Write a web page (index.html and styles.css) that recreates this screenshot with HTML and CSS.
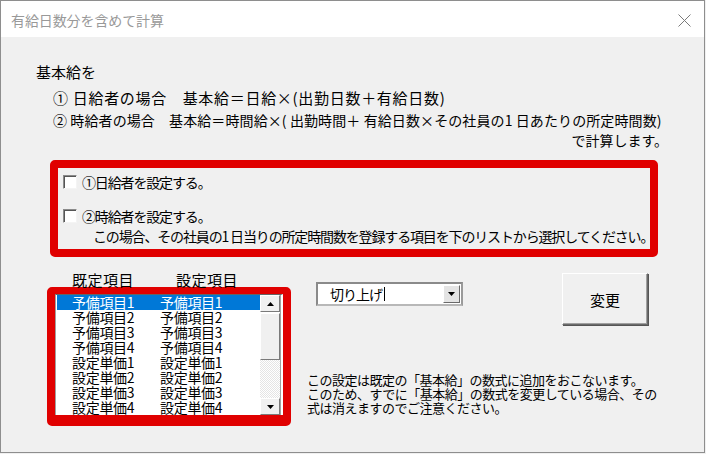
FILE: index.html
```html
<!DOCTYPE html>
<html lang="ja">
<head>
<meta charset="utf-8">
<title>有給日数分を含めて計算</title>
<link rel="stylesheet" href="styles.css">
</head>
<body>
<div class="window">
  <div class="titlebar">
    <span class="title">有給日数分を含めて計算</span>
    <svg class="close" width="13" height="13" viewBox="0 0 13 13"><path d="M0.5 0.5 L12.5 12.5 M12.5 0.5 L0.5 12.5" stroke="#7a7a7a" stroke-width="1" fill="none"/></svg>
  </div>
  <div class="content">
    <div class="intro">
      <div class="l1">基本給を</div>
      <div class="l2">① 日給者の場合　基本給＝日給×(出勤日数＋有給日数)</div>
      <div class="l3">② 時給者の場合　基本給＝時間給×( 出勤時間＋ 有給日数×その社員の1 日あたりの所定時間数)</div>
      <div class="l4">で計算します。</div>
    </div>
    <div class="redbox options">
      <label class="chk-row r1"><span class="chk"></span><span>①日給者を設定する。</span></label>
      <label class="chk-row r2"><span class="chk"></span><span>②時給者を設定する。</span></label>
      <div class="note1">この場合、その社員の1 日当りの所定時間数を登録する項目を下のリストから選択してください。</div>
    </div>
    <div class="lower">
      <div class="leftcol">
        <div class="labels"><span class="lab1">既定項目</span><span class="lab2">設定項目</span></div>
        <div class="redbox listwrap">
          <div class="listbox">
            <div class="rows">
              <div class="row sel"><span class="c1">予備項目1</span><span>予備項目1</span></div>
              <div class="row"><span class="c1">予備項目2</span><span>予備項目2</span></div>
              <div class="row"><span class="c1">予備項目3</span><span>予備項目3</span></div>
              <div class="row"><span class="c1">予備項目4</span><span>予備項目4</span></div>
              <div class="row"><span class="c1">設定単価1</span><span>設定単価1</span></div>
              <div class="row"><span class="c1">設定単価2</span><span>設定単価2</span></div>
              <div class="row"><span class="c1">設定単価3</span><span>設定単価3</span></div>
              <div class="row"><span class="c1">設定単価4</span><span>設定単価4</span></div>
            </div>
            <div class="scrollbar">
              <div class="sbtn"><svg width="7" height="4" viewBox="0 0 7 4"><path d="M3.5 0 L7 4 L0 4 Z" fill="#000"/></svg></div>
              <div class="thumb"></div>
              <div class="track"></div>
              <div class="sbtn"><svg width="7" height="4" viewBox="0 0 7 4"><path d="M0 0 L7 0 L3.5 4 Z" fill="#000"/></svg></div>
            </div>
          </div>
        </div>
      </div>
      <div class="midcol">
        <div class="combo">
          <div class="combo-text">切り上げ<span class="caret"></span></div>
          <div class="combo-btn"><svg width="7" height="4" viewBox="0 0 7 4"><path d="M0 0 L7 0 L3.5 4 Z" fill="#000"/></svg></div>
        </div>
        <div class="note2">
          <div>この設定は既定の「基本給」の数式に追加をおこないます。</div>
          <div>このため、すでに「基本給」の数式を変更している場合、その</div>
          <div>式は消えますのでご注意ください。</div>
        </div>
      </div>
      <div class="rightcol">
        <button class="btn">変更</button>
      </div>
    </div>
  </div>
</div>
</body>
</html>
```
FILE: styles.css
```css
* { box-sizing: border-box; }
html, body { margin: 0; padding: 0; background: #f0f0f0; }
body { width: 706px; height: 454px; overflow: hidden; font-family: "Noto Sans CJK JP", sans-serif; color: #000; }

.window {
  width: 705px;
  height: 453px;
  border: 1px solid #8e8e8e;
  background: #f0f0f0;
  display: flex;
  flex-direction: column;
}

.titlebar {
  height: 36px;
  background: #fff;
  display: flex;
  align-items: center;
  justify-content: space-between;
  padding: 0 13px 0 10px;
  flex: none;
}
.title { font-size: 14px; color: #999; letter-spacing: -0.1px; line-height: 20px; margin-top: 2px; }
.close { display: block; margin-top: 2px; }

.content { flex: 1; display: flex; flex-direction: column; }

.intro { margin-top: 24px; font-size: 15px; white-space: nowrap; }
.l1 { line-height: 22px; padding-left: 35px; }
.l2 { line-height: 22px; padding-left: 52px; margin-top: 4px; letter-spacing: 0.7px; }
.l3 { line-height: 22px; padding-left: 52px; font-size: 14px; letter-spacing: 0.1px; }
.l4 { line-height: 21px; margin-top: -1px; text-align: right; padding-right: 36px; font-size: 14px; letter-spacing: 0; }

.redbox {
  border: 8px solid #e00000;
  border-radius: 5px;
}

.options {
  margin: 9px 0 0 49px;
  width: 608px;
  padding: 4px 0 3px 0;
  font-size: 14px;
  letter-spacing: -1.15px;
  white-space: nowrap;
}
.chk-row { display: flex; align-items: center; line-height: 20px; height: 20px; padding-left: 5px; }
.r2 { margin-top: 14px; }
.chk {
  width: 14px; height: 14px;
  background: #fff;
  border: 1px solid;
  border-color: #8a8a8a #f4f4f4 #f4f4f4 #8a8a8a;
  box-shadow: inset 1px 1px 0 #555;
  margin-right: 5px;
  flex: none;
}
.note1 { line-height: 20px; padding-left: 35px; }

.lower { display: flex; align-items: flex-start; margin-top: 14px; }

.leftcol { margin-left: 46px; width: 244px; flex: none; }
.labels { font-size: 15px; line-height: 18px; height: 16px; letter-spacing: 0.5px; white-space: nowrap; }
.lab1 { margin-left: 25px; }
.lab2 { margin-left: 42px; }

.listwrap {
  border-width: 7px 8px 11px 8px;
  border-radius: 5px;
}
.listbox {
  display: flex;
  height: 121px;
  background: #fff;
  border-top: 1px solid #646464;
  border-left: 1px solid #a0a0a0;
  border-right: 2px solid #fff;
  padding: 0 0 0 1px;
  overflow: hidden;
}
.rows { flex: 1; font-size: 14px; letter-spacing: -0.3px; }
.row { height: 15px; line-height: 15px; padding-left: 15px; display: flex; white-space: nowrap; }
.row .c1 { width: 88px; }
.row.sel { background: #0078d7; color: #fff; }

.scrollbar { width: 21px; display: flex; flex-direction: column; border-right: 1px solid #a0a0a0; }
.sbtn {
  height: 17px;
  background: #f0f0f0;
  border: 1px solid;
  border-color: #fff #7a7a7a #7a7a7a #fff;
  display: flex; align-items: center; justify-content: center;
  flex: none;
}
.thumb {
  height: 47px;
  background: #f0f0f0;
  border: 1px solid;
  border-color: #fff #7a7a7a #7a7a7a #fff;
  margin-top: 1px;
  flex: none;
}
.track {
  flex: 1;
  background: repeating-conic-gradient(#fff 0 25%, #e4e4e4 0 50%) 0 0 / 2px 2px;
}

.midcol { margin-left: 16px; width: 250px; flex: none; }
.combo {
  margin: 11px 0 0 9px;
  width: 147px; height: 24px;
  border: 2px solid #8a8a8a;
  border-right-color: #9a9a9a;
  border-bottom-color: #b8b8b8;
  background: #fff;
  display: flex;
  align-items: stretch;
}
.combo-text { flex: 1; font-size: 14px; line-height: 20px; padding-left: 12px; letter-spacing: -1px; display: flex; align-items: center; }
.caret { display: inline-block; width: 1px; height: 14px; background: #000; margin-left: 2px; }
.combo-btn {
  width: 17px;
  margin: 1px 1px 1px 0;
  background: #e4e4e4;
  border: 1px solid;
  border-color: #fff #6a6a6a #6a6a6a #fff;
  display: flex; align-items: center; justify-content: center;
}
.note2 { margin-top: 67px; font-size: 13px; line-height: 14px; letter-spacing: -0.5px; white-space: nowrap; }

.rightcol { margin-left: 5px; }
.btn {
  margin-top: 2px;
  width: 86px; height: 52px;
  background: #f0f0f0;
  border: 1px solid;
  border-color: #fff #6a6a6a #6a6a6a #fff;
  box-shadow: inset -1px -1px 0 #a0a0a0, 1px 1px 0 #555;
  font-family: "Noto Sans CJK JP", sans-serif;
  font-size: 15px;
  padding: 0;
  color: #000;
}
```
